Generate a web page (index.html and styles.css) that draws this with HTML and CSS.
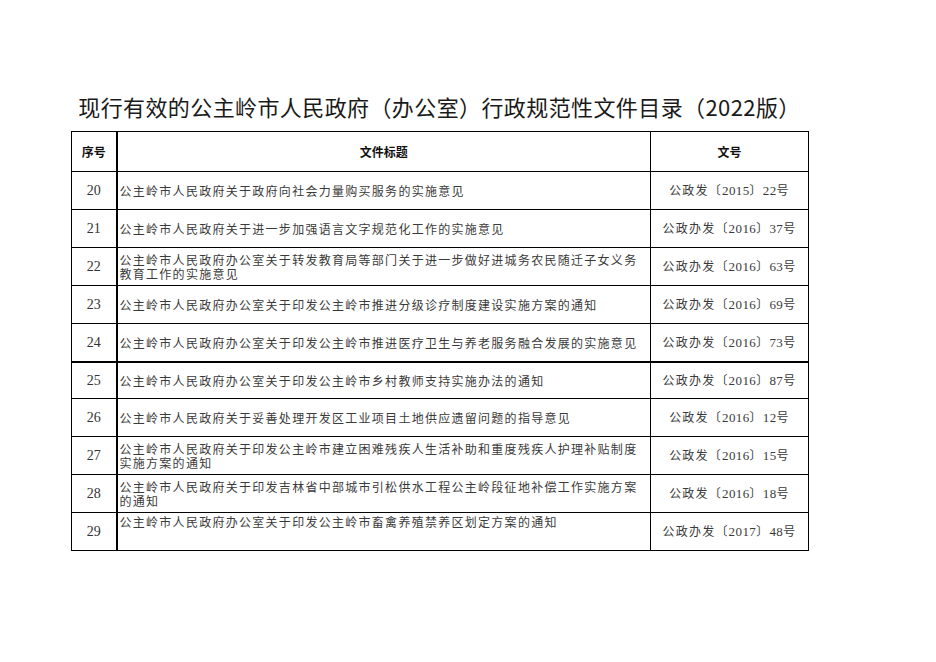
FILE: index.html
```html
<!DOCTYPE html>
<html lang="zh-CN">
<head>
<meta charset="utf-8">
<title>行政规范性文件目录</title>
<link rel="stylesheet" href="styles.css">
</head>
<body>
<div class="page">
  <h1 class="title">现行有效的公主岭市人民政府（办公室）行政规范性文件目录（2022版）</h1>
  <table class="doc-table">
    <colgroup>
      <col class="c-seq">
      <col class="c-title">
      <col class="c-num">
    </colgroup>
    <thead>
      <tr class="head-row">
        <th class="seq">序号</th>
        <th>文件标题</th>
        <th>文号</th>
      </tr>
    </thead>
    <tbody>
      <tr><td class="seq">20</td><td class="name">公主岭市人民政府关于政府向社会力量购买服务的实施意见</td><td class="num">公政发〔<span class="d">2015</span>〕<span class="d">22</span>号</td></tr>
      <tr><td class="seq">21</td><td class="name">公主岭市人民政府关于进一步加强语言文字规范化工作的实施意见</td><td class="num">公政办发〔<span class="d">2016</span>〕<span class="d">37</span>号</td></tr>
      <tr><td class="seq">22</td><td class="name">公主岭市人民政府办公室关于转发教育局等部门关于进一步做好进城务农民随迁子女义务教育工作的实施意见</td><td class="num">公政办发〔<span class="d">2016</span>〕<span class="d">63</span>号</td></tr>
      <tr><td class="seq">23</td><td class="name">公主岭市人民政府办公室关于印发公主岭市推进分级诊疗制度建设实施方案的通知</td><td class="num">公政办发〔<span class="d">2016</span>〕<span class="d">69</span>号</td></tr>
      <tr class="thick-below"><td class="seq">24</td><td class="name">公主岭市人民政府办公室关于印发公主岭市推进医疗卫生与养老服务融合发展的实施意见</td><td class="num">公政办发〔<span class="d">2016</span>〕<span class="d">73</span>号</td></tr>
      <tr class="short"><td class="seq">25</td><td class="name">公主岭市人民政府办公室关于印发公主岭市乡村教师支持实施办法的通知</td><td class="num">公政办发〔<span class="d">2016</span>〕<span class="d">87</span>号</td></tr>
      <tr><td class="seq">26</td><td class="name">公主岭市人民政府关于妥善处理开发区工业项目土地供应遗留问题的指导意见</td><td class="num">公政发〔<span class="d">2016</span>〕<span class="d">12</span>号</td></tr>
      <tr><td class="seq">27</td><td class="name">公主岭市人民政府关于印发公主岭市建立困难残疾人生活补助和重度残疾人护理补贴制度实施方案的通知</td><td class="num">公政发〔<span class="d">2016</span>〕<span class="d">15</span>号</td></tr>
      <tr><td class="seq">28</td><td class="name">公主岭市人民政府关于印发吉林省中部城市引松供水工程公主岭段征地补偿工作实施方案的通知</td><td class="num">公政发〔<span class="d">2016</span>〕<span class="d">18</span>号</td></tr>
      <tr class="last"><td class="seq">29</td><td class="name top">公主岭市人民政府办公室关于印发公主岭市畜禽养殖禁养区划定方案的通知</td><td class="num">公政办发〔<span class="d">2017</span>〕<span class="d">48</span>号</td></tr>
    </tbody>
  </table>
</div>
</body>
</html>
```
FILE: styles.css
```css
html, body {
  margin: 0;
  padding: 0;
  background: #ffffff;
}

body {
  font-family: "Noto Sans CJK SC", "Liberation Serif", serif;
  color: #3a3a3a;
}

.page {
  width: 737px;
  margin-left: 71px;
  padding-top: 91px;
}

.title {
  margin: 0 0 10px 0;
  height: 30px;
  line-height: 30px;
  font-size: 22px;
  font-weight: 400;
  color: #1a1a1a;
  text-align: center;
  white-space: nowrap;
  letter-spacing: 0.4px;
}

.doc-table {
  border-collapse: collapse;
  table-layout: fixed;
  width: 737px;
}

.c-seq { width: 45px; }
.c-title { width: 534px; }
.c-num { width: 158px; }

.doc-table th,
.doc-table td {
  border: 1px solid #000000;
  padding: 0;
  vertical-align: middle;
}

.head-row th {
  height: 39px;
  font-size: 12px;
  font-weight: 700;
  color: #111111;
  text-align: center;
}

.doc-table td {
  height: 37px;
  font-size: 12px;
  line-height: 14px;
}

.doc-table .seq {
  border-right: 2px solid #000000;
  text-align: center;
}

td.seq {
  font-family: "Liberation Serif", "Noto Sans CJK SC", serif;
  font-size: 14px;
  color: #333333;
}

td.name {
  padding: 0 8px 0 2px;
  letter-spacing: 1.28px;
  text-align: left;
}

td.name.top {
  vertical-align: top;
  padding-top: 2px;
}

td.num {
  text-align: center;
  letter-spacing: 1.2px;
  white-space: nowrap;
}

td.num .d {
  font-family: "Liberation Serif", serif;
  font-size: 13px;
  letter-spacing: 0.4px;
}

tr.thick-below td {
  border-bottom: 2px solid #000000;
}

tr.short td {
  height: 35px;
}

tr.last td {
  height: 35px;
}
```
